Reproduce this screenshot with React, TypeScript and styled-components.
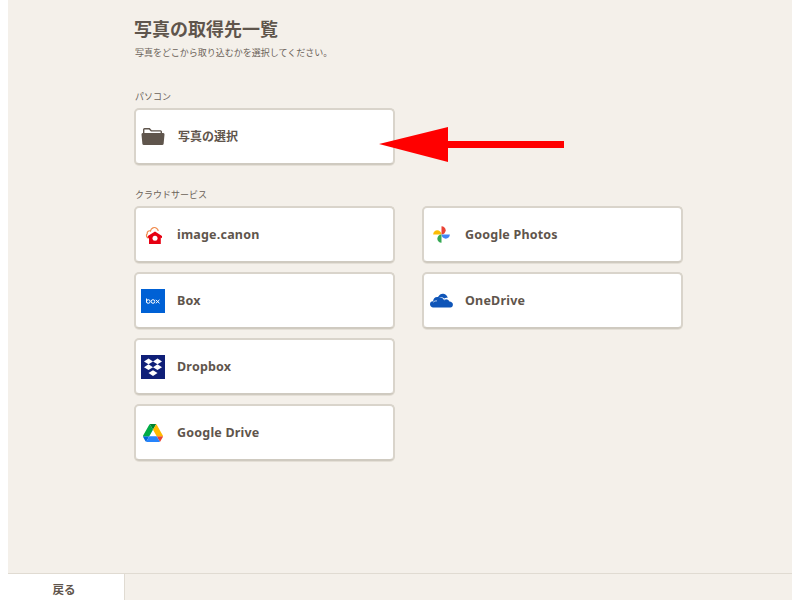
import React from "react";
import styled, { createGlobalStyle } from "styled-components";

const Global = createGlobalStyle`
  html, body { margin: 0; padding: 0; background: #fff; height: 100%; overflow: hidden; }
  #root { height: 100%; }
  * { box-sizing: border-box; }
`;

const Page = styled.div`
  position: relative;
  width: 784px;
  height: 600px;
  margin: 0 8px;
  background: #f4f0ea;
  display: flex;
  flex-direction: column;
  color: #5b5148;
  font-family: "Noto Sans", "Noto Sans CJK JP", sans-serif;
`;

const Main = styled.main`
  flex: 1;
  padding: 18px 0 0 126px;
`;

const Title = styled.h1`
  margin: 0;
  font-size: 18px;
  line-height: 22px;
  font-weight: 700;
  color: #5f554c;
`;

const Lead = styled.p`
  margin: 6px 0 0 1px;
  font-size: 9px;
  line-height: 14px;
  color: #6b6259;
`;

const SectionLabel = styled.h2<{ $top: number }>`
  margin: ${(p) => p.$top}px 0 4px 1px;
  font-size: 9px;
  line-height: 14px;
  font-weight: 400;
  color: #6b6259;
`;

const Grid = styled.div`
  display: grid;
  grid-template-columns: 261px 261px;
  grid-template-rows: repeat(4, 57px);
  column-gap: 27px;
  row-gap: 9px;
  width: 549px;
`;

const SingleRow = styled.div`
  width: 261px;
  height: 57px;
  display: flex;
`;

const Card = styled.button<{ $area?: string; $jp?: boolean }>`
  width: 261px;
  height: 57px;
  display: flex;
  align-items: center;
  gap: ${(p) => (p.$jp ? "13px" : "12px")};
  padding: ${(p) => (p.$jp ? "0 0 2px 5px" : "0 0 0 5px")};
  background: #fff;
  border: 2px solid #d9d4cb;
  border-bottom-color: #cfcac0;
  border-radius: 5px;
  box-shadow: 0 1px 0 #e4dfd6;
  color: #5f554c;
  font: inherit;
  font-size: ${(p) => (p.$jp ? "12px" : "12.5px")};
  font-weight: 700;
  letter-spacing: ${(p) => (p.$jp ? "0" : "0.2px")};
  text-align: left;
  grid-area: ${(p) => p.$area ?? "auto"};
`;

const IconSlot = styled.span`
  width: 24px;
  height: 24px;
  flex: none;
  display: flex;
  align-items: center;
  justify-content: center;
`;

const Footer = styled.footer`
  height: 27px;
  border-top: 1px solid #e0dbd2;
  display: flex;
`;

const BackButton = styled.button`
  width: 117px;
  background: #fff;
  border: 0;
  border-right: 1px solid #e0dbd2;
  padding: 4px 4px 0 0;
  color: #5f554c;
  font: inherit;
  font-size: 11.5px;
  font-weight: 700;
`;

const Arrow = styled.svg`
  position: absolute;
  left: 370px;
  top: 120px;
`;

const Folder = () => (
  <svg width="24" height="20" viewBox="0 0 24 20">
    <path d="M2 7V3.500A1.500 1.500 0 0 1 3.500 2h5.200l2 2.200h8.800A1.500 1.500 0 0 1 21 5.700V7h-1.400V5.600H10L8 3.400H3.400V7z" fill="#5f554c" />
    <path d="M1.700 7h20.600A1.300 1.300 0 0 1 23.500 8.400l-.9 9.500A1.500 1.500 0 0 1 21.100 19H2.900a1.500 1.500 0 0 1-1.500-1.100L.5 8.400A1.300 1.300 0 0 1 1.700 7z" fill="#5f554c" />
  </svg>
);

const ImageCanon = () => (
  <svg width="20" height="20" viewBox="0 0 20 20">
    <path d="M6 13C3.600 13 2.600 10.200 4.200 8.700 3.900 6.600 6 5.200 7.500 6 8 3 11.500 1.500 13.500 3.300c1.300 1 1.700 1.900 1.700 2.700" fill="none" stroke="#f08a4b" strokeWidth="1.200" />
    <path d="M12 6.500l7 4.600v2.100l-1.200-.7V19H6v-6.500l-1.200.7v-2.100z" fill="#e60012" />
    <circle cx="12" cy="13.300" r="2.500" fill="#fff" />
  </svg>
);

const BoxLogo = () => (
  <svg width="24" height="24" viewBox="0 0 24 24">
    <rect width="24" height="24" fill="#0061d5" />
    <g fill="none" stroke="#fff" strokeWidth="1">
      <path d="M5.500 9.500v4" />
      <circle cx="7.300" cy="12.500" r="1.800" />
      <circle cx="12" cy="12.500" r="1.800" />
      <path d="M14.800 10.800l3.700 3.500M18.500 10.800l-3.700 3.500" />
    </g>
  </svg>
);

const DropboxLogo = () => (
  <svg width="24" height="24" viewBox="0 0 24 24">
    <rect width="24" height="24" fill="#0f1f78" />
    <g fill="#fff">
      <path d="M7.500 3.500l4.500 2.900-4.500 2.900L3 6.400z" />
      <path d="M16.500 3.500L21 6.400l-4.500 2.900L12 6.400z" />
      <path d="M7.500 9.300l4.500 2.900-4.500 2.900L3 12.200z" />
      <path d="M16.500 9.300l4.500 2.900-4.500 2.900-4.500-2.900z" />
      <path d="M12 15.200l4.500 2.900-4.500 2.900-4.500-2.900z" />
    </g>
  </svg>
);

const DriveLogo = () => (
  <svg width="20" height="18" viewBox="0 0 87.300 78">
    <path d="M6.600 66.850l3.850 6.650c.8 1.400 1.950 2.500 3.300 3.300L27.500 53H0c0 1.550.4 3.100 1.200 4.500z" fill="#0066da" />
    <path d="M43.650 25L29.900 1.200c-1.350.8-2.500 1.900-3.300 3.300L1.200 48.500C.4 49.900 0 51.450 0 53h27.500z" fill="#00ac47" />
    <path d="M73.550 76.800c1.350-.8 2.500-1.900 3.300-3.300l1.600-2.750 7.650-13.250c.8-1.400 1.200-2.950 1.200-4.500H59.800l5.850 11.500z" fill="#ea4335" />
    <path d="M43.650 25L57.400 1.200C56.050.4 54.500 0 52.900 0H34.400c-1.600 0-3.150.45-4.500 1.200z" fill="#00832d" />
    <path d="M59.800 53H27.500L13.750 76.800c1.350.8 2.900 1.200 4.500 1.200h50.800c1.600 0 3.150-.45 4.500-1.200z" fill="#2684fc" />
    <path d="M73.400 26.500L60.700 4.500c-.8-1.400-1.950-2.500-3.300-3.300L43.650 25 59.800 53h27.450c0-1.550-.4-3.100-1.200-4.500z" fill="#ffba00" />
  </svg>
);

const PhotosLogo = () => (
  <svg width="19" height="19" viewBox="0 0 20 20">
    <path d="M10 10H1.200C1.200 7.500 3.300 5.600 5.500 5.600S10 7.500 10 10z" fill="#fbbc04" />
    <path d="M10 10V1.200c2.500 0 4.400 2.100 4.400 4.300S12.500 10 10 10z" fill="#ea4335" />
    <path d="M10 10h8.800c0 2.500-2.100 4.400-4.300 4.400S10 12.500 10 10z" fill="#4285f4" />
    <path d="M10 10v8.800c-2.500 0-4.400-2.100-4.400-4.300S7.500 10 10 10z" fill="#34a853" />
  </svg>
);

const OneDriveLogo = () => (
  <svg width="23" height="15" viewBox="0 0 23 15">
    <path d="M3.200 8.500C3 5.500 5.300 3.500 8 4 9.300 1.500 11.300.4 13.400.7c2.400.4 4 2.200 4.300 4.300-1.200-.4-2.500-.2-3.500.5C13 4.300 11.300 4 10 4.500 8.200 5 7 6.600 6.900 8.400 5.400 8.200 4 8.500 3.200 9.300z" fill="#0f55b8" />
    <path d="M2.800 14.500C1 14 0 12.700 0 11.200c0-1.700 1.300-3.100 3.100-2.900.7-.9 2.300-1.300 3.700-.9.100-2 1.500-3 3.300-3 1.500 0 2.900.8 3.600 2.300 1-.8 2.600-.9 3.800-.3 1 .5 1.700 1.300 1.900 2.200 2 0 3.500 1.300 3.500 3.100 0 1.600-1 2.600-2.500 2.800z" fill="#0f55b8" />
    <path d="M3.200 9.200c.9-1 2.300-1.500 3.800-1.300M14.100 7c1-.8 2.300-1.100 3.400-.9" fill="none" stroke="#fff" strokeWidth="0.700" />
  </svg>
);

const services = [
  { name: "image.canon", icon: <ImageCanon />, area: "1 / 1" },
  { name: "Box", icon: <BoxLogo />, area: "2 / 1" },
  { name: "Dropbox", icon: <DropboxLogo />, area: "3 / 1" },
  { name: "Google Drive", icon: <DriveLogo />, area: "4 / 1" },
  { name: "Google Photos", icon: <PhotosLogo />, area: "1 / 2" },
  { name: "OneDrive", icon: <OneDriveLogo />, area: "2 / 2" },
];

export default function App() {
  return (
    <>
      <Global />
      <Page>
        <Main>
          <Title>写真の取得先一覧</Title>
          <Lead>写真をどこから取り込むかを選択してください。</Lead>
          <SectionLabel $top={30}>パソコン</SectionLabel>
          <SingleRow>
            <Card $jp>
              <IconSlot><Folder /></IconSlot>
              写真の選択
            </Card>
          </SingleRow>
          <SectionLabel $top={23}>クラウドサービス</SectionLabel>
          <Grid>
            {services.map((s) => (
              <Card key={s.name} $area={s.area}>
                <IconSlot>{s.icon}</IconSlot>
                {s.name}
              </Card>
            ))}
          </Grid>
        </Main>
        <Footer>
          <BackButton>戻る</BackButton>
        </Footer>
        <Arrow width="200" height="50" viewBox="0 0 200 50">
          <path d="M1 24L70 7v14h116v7H70v14z" fill="#ff0000" />
        </Arrow>
      </Page>
    </>
  );
}
